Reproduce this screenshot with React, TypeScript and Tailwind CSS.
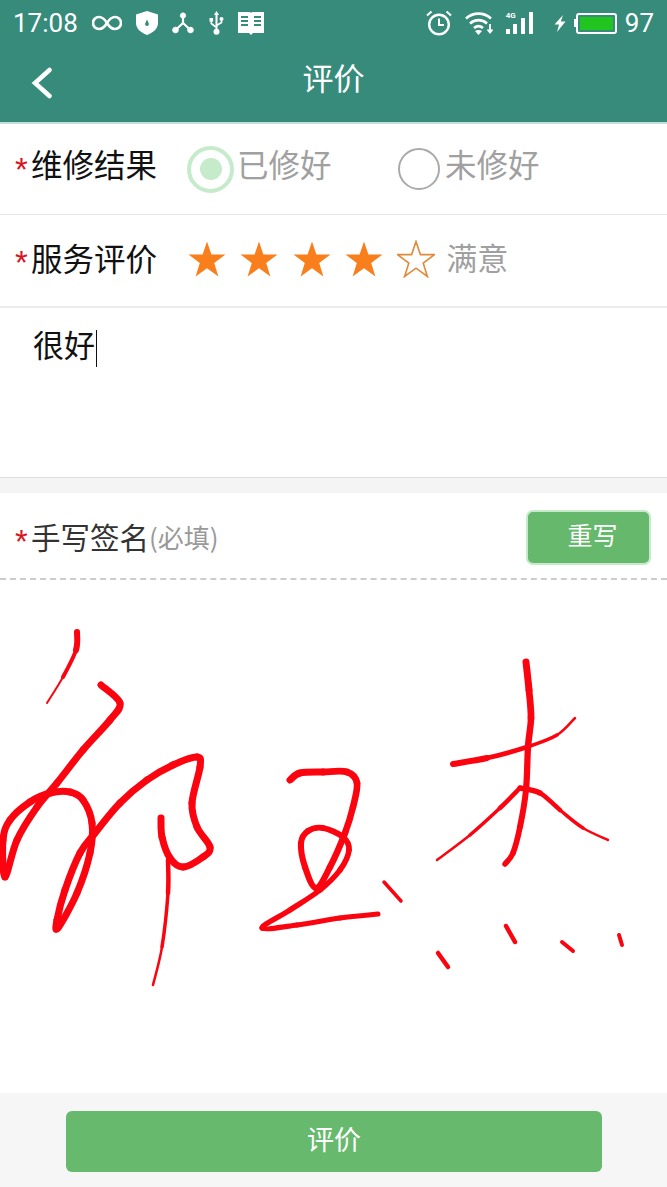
type Point = [number, number];
type Stroke = { from: number; to: number; points: Point[] };

// one bezier piece per pair of pen points, so the width can taper along the stroke
const segments = (points: Point[]) => {
  const out: string[] = [];
  for (let i = 0; i < points.length - 1; i++) {
    const p0 = points[i - 1] || points[i];
    const p1 = points[i];
    const p2 = points[i + 1];
    const p3 = points[i + 2] || p2;
    const c1x = p1[0] + (p2[0] - p0[0]) / 6;
    const c1y = p1[1] + (p2[1] - p0[1]) / 6;
    const c2x = p2[0] - (p3[0] - p1[0]) / 6;
    const c2y = p2[1] - (p3[1] - p1[1]) / 6;
    out.push(`M${p1[0]} ${p1[1]} C${c1x} ${c1y} ${c2x} ${c2y} ${p2[0]} ${p2[1]}`);
  }
  return out;
};

const STROKES: Stroke[] = [
  { from: 6, to: 2, points: [[77, 632], [76, 650], [63, 677], [47, 703]] },
  {
    from: 7,
    to: 7,
    points: [[101, 685], [120, 703], [110, 720], [83, 750], [57, 783], [37, 807], [17, 840], [5, 877], [3, 840], [10, 820], [30, 802], [50, 793], [70, 792], [83, 800], [92, 823], [90, 853], [77, 893], [58, 928], [57, 920], [65, 890], [80, 853], [95, 833], [120, 803], [147, 780], [173, 765], [197, 757], [200, 767], [192, 803], [197, 827], [210, 847], [203, 857], [183, 867], [170, 858], [162, 837], [161, 818]],
  },
  { from: 4.500, to: 2.500, points: [[168, 860], [168, 893], [162, 947], [153, 985]] },
  {
    from: 7,
    to: 5,
    points: [[290, 780], [300, 773], [323, 772], [347, 772], [357, 783], [353, 807], [345, 833], [330, 867], [316, 888], [305, 867], [301, 843], [308, 831], [323, 828], [343, 837], [349, 850], [340, 870], [320, 890], [290, 910], [262, 928], [297, 925], [340, 918], [378, 914]],
  },
  { from: 3.500, to: 2.500, points: [[384, 882], [401, 901]] },
  { from: 7, to: 5.500, points: [[526, 662], [529, 690], [531, 718], [528, 747], [526, 790], [520, 827], [513, 853], [505, 864]] },
  { from: 6, to: 2.500, points: [[453, 764], [487, 758], [527, 747], [557, 735], [575, 718]] },
  { from: 2.500, to: 4.500, points: [[437, 860], [470, 835], [500, 808], [520, 788]] },
  { from: 5.500, to: 2.500, points: [[520, 788], [540, 793], [560, 810], [583, 828], [608, 840]] },
  { from: 4.500, to: 2.500, points: [[438, 953], [448, 967]] },
  { from: 4.500, to: 2.500, points: [[506, 926], [515, 942]] },
  { from: 4, to: 2.500, points: [[562, 942], [573, 951]] },
  { from: 4, to: 2.500, points: [[619, 935], [622, 945]] },
];

const Required = () => (
  <span className="w-[16px] shrink-0 text-[33px] leading-none text-[#d8161f] font-['Liberation_Sans',sans-serif] translate-y-[5px]">*</span>
);

const Star = ({ filled }: { filled: boolean }) => (
  <svg width="38" height="38" viewBox="0 0 38 38">
    <polygon
      points="19,1.5 23.4,14.6 37.5,14.6 26.2,23 30.4,36.5 19,28.2 7.6,36.5 11.8,23 0.5,14.6 14.6,14.6"
      fill={filled ? '#f97f1c' : '#fff'}
      stroke={filled ? 'none' : '#e08a3c'}
      strokeWidth="1.6"
    />
  </svg>
);

const StatusBar = () => (
  <div className="h-[46px] flex items-center justify-between pl-[13px] pr-[13px] text-white text-[26px] font-['Roboto',sans-serif]">
    <div className="flex items-center">
      <span className="w-[65px]">17:08</span>
      <svg className="ml-[14px]" width="30" height="18" viewBox="0 0 30 18" fill="none" stroke="#fff" strokeWidth="2.6">
        <path d="M15 9C12 4 9.500 3 7 3a6 6 0 0 0 0 12c2.500 0 5-1 8-6s5.500-6 8-6a6 6 0 0 1 0 12c-2.500 0-5-1-8-6z" />
      </svg>
      <svg className="ml-[14px]" width="22" height="24" viewBox="0 0 22 24">
        <path d="M11 0l11 3.500V12c0 5.500-4.500 9.500-11 12C4.500 21.500 0 17.500 0 12V3.500z" fill="#fff" />
        <path d="M11 8.500l1.800 4a1.900 1.900 0 1 1-3.600 0z" fill="#378b7b" />
      </svg>
      <svg className="ml-[14px]" width="22" height="22" viewBox="0 0 22 22" fill="#fff" stroke="#fff">
        <path d="M11 3.500V11L3.500 18M11 11l7.500 7" strokeWidth="2.200" fill="none" />
        <circle cx="11" cy="3.500" r="2.600" />
        <circle cx="3.500" cy="18" r="2.800" />
        <circle cx="18.500" cy="18" r="2.800" />
      </svg>
      <svg className="ml-[15px]" width="15" height="24" viewBox="0 0 15 24" fill="#fff">
        <path d="M7.500 0l2.600 4H8.500v14.500h-2V4H4.900z" />
        <circle cx="7.500" cy="20.800" r="3" />
        <rect x="0.500" y="7" width="3.600" height="3.600" />
        <circle cx="12.500" cy="8" r="2" />
        <path d="M2.300 10v2.500l4.500 3.500M12.500 9.500v2l-5 3" stroke="#fff" strokeWidth="1.600" fill="none" />
      </svg>
      <svg className="ml-[14px]" width="26" height="23" viewBox="0 0 26 23">
        <path d="M0 0h12l1 1 1-1h12v21H15l-2 2-2-2H0z" fill="#fff" />
        <path d="M3 5h7M3 9h7M3 13h7M16 5h7M16 9h7M16 13h7" stroke="#378b7b" strokeWidth="2" />
      </svg>
    </div>
    <div className="flex items-center">
      <svg width="26" height="26" viewBox="0 0 26 26" fill="none" stroke="#fff" strokeWidth="2.400">
        <circle cx="13" cy="14.500" r="9.800" />
        <path d="M13 8.500v6.500h5" strokeWidth="2" />
        <path d="M1 5.500L5.500 1.500M25 5.500l-4.500-4" strokeWidth="2" />
      </svg>
      <svg className="ml-[13px]" width="29" height="24" viewBox="0 0 29 24" fill="none" stroke="#fff" strokeWidth="2.600">
        <path d="M1 7.500C8 1 19 1 26 7.500" />
        <path d="M5 12.500c5-4.500 12-4.500 17 0" />
        <path d="M9 17c3-2.500 6-2.500 9 0" />
        <path d="M13.500 24l-3.500-4c2-1.400 5-1.400 7 0z" fill="#fff" stroke="none" />
        <path d="M25 13v8M22.500 18.500l2.500 3 2.500-3" strokeWidth="1.800" />
      </svg>
      <div className="ml-[12px] w-[35px] h-[22px] relative flex items-end gap-[3.500px]">
        <span className="absolute left-0 top-[-1px] text-[8px] font-bold leading-[9px]">4G</span>
        <span className="w-[4px] h-[5px] bg-white" />
        <span className="w-[4px] h-[10px] bg-white" />
        <span className="w-[4px] h-[16px] bg-white" />
        <span className="w-[4px] h-[22px] bg-white ml-[1px]" />
      </div>
      <svg className="ml-[13px]" width="12" height="17" viewBox="0 0 12 17" fill="#fff">
        <path d="M9 0L0.500 9.500H5L3 17l8.500-10.500H6.800z" />
      </svg>
      <div className="ml-[8px] flex items-center">
        <span className="w-[2px] h-[8px] bg-white" />
        <div className="w-[41px] h-[21px] rounded-[3px] border-2 border-white p-[2px]">
          <div className="h-full w-full bg-[#22c41f]" />
        </div>
      </div>
      <span className="ml-[8px]">97</span>
    </div>
  </div>
);

export default function App() {
  return (
    <div className="w-[667px] h-[1187px] flex flex-col bg-white font-['Noto_Sans_CJK_SC',sans-serif] overflow-hidden">
      <div className="h-[124px] shrink-0 bg-[#378b7b] border-b-2 border-[#c4dfd9]">
        <StatusBar />
        <div className="h-[76px] relative flex items-center justify-center text-white text-[31px]">
          <svg className="absolute left-[31px] top-[21px]" width="22" height="32" viewBox="0 0 22 32" fill="none" stroke="#fff" strokeWidth="4.500" strokeLinecap="round">
            <path d="M18.500 3L4 16l14.500 13" />
          </svg>
          <span className="-translate-y-[7px]">评价</span>
        </div>
      </div>

      <div className="h-[91px] shrink-0 flex items-center pl-[15px] border-b border-[#e6e6e6]">
        <div className="flex items-center -translate-y-[5px]">
          <Required />
          <span className="w-[156px] text-[31.500px] text-[#111]">维修结果</span>
        </div>
        <div className="w-[47px] h-[47px] rounded-full border-4 border-[#c5ebcb] flex items-center justify-center">
          <div className="w-[22px] h-[22px] rounded-full bg-[#c5ebcb]" />
        </div>
        <span className="ml-[3px] w-[161px] text-[31.500px] text-[#a0a0a0] -translate-y-[5px]">已修好</span>
        <div className="w-[42px] h-[42px] rounded-full border-2 border-[#aaaaaa]" />
        <span className="ml-[5px] text-[31.500px] text-[#a0a0a0] -translate-y-[5px]">未修好</span>
      </div>

      <div className="h-[93px] shrink-0 flex items-center pl-[15px] border-b-2 border-[#ececec]">
        <div className="flex items-center -translate-y-[3px]">
          <Required />
          <span className="w-[156px] text-[31.500px] text-[#111]">服务评价</span>
        </div>
        <div className="flex items-center gap-[14.300px] -translate-y-[2px] translate-x-[1px]">
          <Star filled />
          <Star filled />
          <Star filled />
          <Star filled />
          <Star filled={false} />
        </div>
        <span className="ml-[12px] text-[31px] text-[#a0a0a0] -translate-y-[3px]">满意</span>
      </div>

      <div className="h-[170px] shrink-0 border-b border-[#e0e0e0] pl-[33px] pt-[13px]">
        <div className="flex items-start text-[31px] leading-[46px] text-[#111]">
          <span>很好</span>
          <span className="w-px h-[37px] mt-[9px] ml-[1px] bg-[#111]" />
        </div>
      </div>

      <div className="h-[15px] shrink-0 bg-[#f4f4f4]" />

      <div className="h-[87px] shrink-0 flex items-center justify-between pl-[15px] pr-[16px] border-b-2 border-dashed border-[#cccccc]">
        <div className="flex items-center translate-y-[1px]">
          <Required />
          <span className="text-[29.500px] text-[#333]">手写签名</span>
          <span className="text-[26px] text-[#999]">(必填)</span>
        </div>
        <button className="w-[125px] h-[55px] rounded-[7px] bg-[#65b86c] border-2 border-[#c5ebcb] text-white text-[25px] translate-y-[2px]">
          <span className="block -translate-y-[3px] translate-x-[4px]">重写</span>
        </button>
      </div>

      <div className="h-[513px] shrink-0">
        <svg width="667" height="513" viewBox="0 580 667 513" fill="none" stroke="#fa0410" strokeLinecap="round" strokeLinejoin="round">
          {STROKES.flatMap((stroke, i) => {
            const parts = segments(stroke.points);
            return parts.map((d, j) => (
              <path
                key={`${i}-${j}`}
                d={d}
                strokeWidth={stroke.from + ((stroke.to - stroke.from) * j) / Math.max(parts.length - 1, 1)}
              />
            ));
          })}
        </svg>
      </div>

      <div className="flex-1 bg-[#f6f6f6] pt-[18px] pl-[66px]">
        <button className="w-[536px] h-[61px] rounded-[6px] bg-[#67b96d] text-white text-[27px]">
          <span className="block -translate-y-[2px]">评价</span>
        </button>
      </div>
    </div>
  );
}
